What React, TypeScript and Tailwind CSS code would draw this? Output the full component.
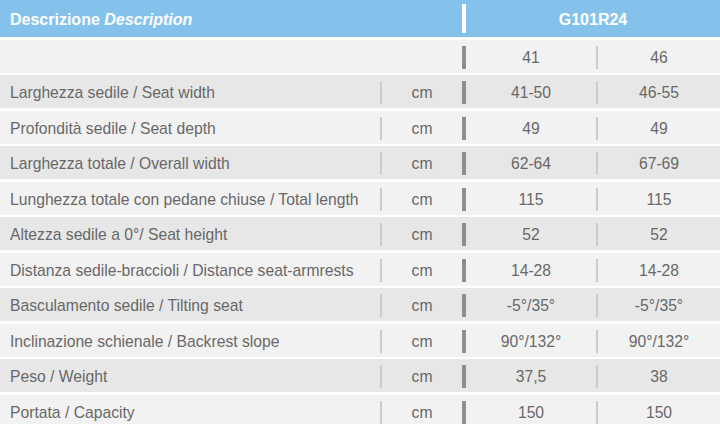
const rows: [string, string, string, string][] = [
  ['Larghezza sedile / Seat width', 'cm', '41-50', '46-55'],
  ['Profondità sedile / Seat depth', 'cm', '49', '49'],
  ['Larghezza totale / Overall width', 'cm', '62-64', '67-69'],
  ['Lunghezza totale con pedane chiuse / Total length', 'cm', '115', '115'],
  ['Altezza sedile a 0°/ Seat height', 'cm', '52', '52'],
  ['Distanza sedile-braccioli / Distance seat-armrests', 'cm', '14-28', '14-28'],
  ['Basculamento sedile / Tilting seat', 'cm', '-5°/35°', '-5°/35°'],
  ['Inclinazione schienale / Backrest slope', 'cm', '90°/132°', '90°/132°'],
  ['Peso / Weight', 'cm', '37,5', '38'],
  ['Portata / Capacity', 'cm', '150', '150'],
]

function Row({ label, unit, a, b, dark, showUnitBar = true }: { label: string; unit: string; a: string; b: string; dark: boolean; showUnitBar?: boolean }) {
  return (
    <div className={`flex h-[33px] shrink-0 items-center ${dark ? 'bg-[#e7e7e7]' : 'bg-[#f2f2f2]'}`}>
      <div className="w-[380px] shrink-0 pl-[10px] pt-[3px] whitespace-nowrap">{label}</div>
      <div className={`h-[23px] w-[2px] shrink-0 translate-y-[1px] ${showUnitBar ? 'bg-[#cccccc]' : ''}`} />
      <div className="w-[80px] shrink-0 pt-[3px] text-center">{unit}</div>
      <div className="h-[23px] w-[4px] shrink-0 translate-y-[1px] bg-[#8e8e8e]" />
      <div className="w-[130px] shrink-0 pt-[3px] text-center">{a}</div>
      <div className="h-[23px] w-[2px] shrink-0 translate-y-[1px] bg-[#cccccc]" />
      <div className="flex-1 pt-[3px] text-center">{b}</div>
    </div>
  )
}

export default function App() {
  return (
    <div className="flex h-[424px] w-[720px] flex-col gap-[2.5px] overflow-hidden bg-white font-['Liberation_Sans',Arial,sans-serif] text-[15.7px] text-[#686868]">
      <div className="flex h-[37px] shrink-0 items-center bg-[#84c2ec] text-[16px] font-bold text-white">
        <div className="w-[462px] shrink-0 pl-[10px] pt-[2px]">
          Descrizione <span className="italic">Description</span>
        </div>
        <div className="h-[29px] w-[4px] shrink-0 bg-white" />
        <div className="flex-1 pt-[2px] text-center">G101R24</div>
      </div>
      <Row label="" unit="" a="41" b="46" dark={false} showUnitBar={false} />
      {rows.map((r, i) => (
        <Row key={r[0]} label={r[0]} unit={r[1]} a={r[2]} b={r[3]} dark={i % 2 === 0} />
      ))}
    </div>
  )
}
